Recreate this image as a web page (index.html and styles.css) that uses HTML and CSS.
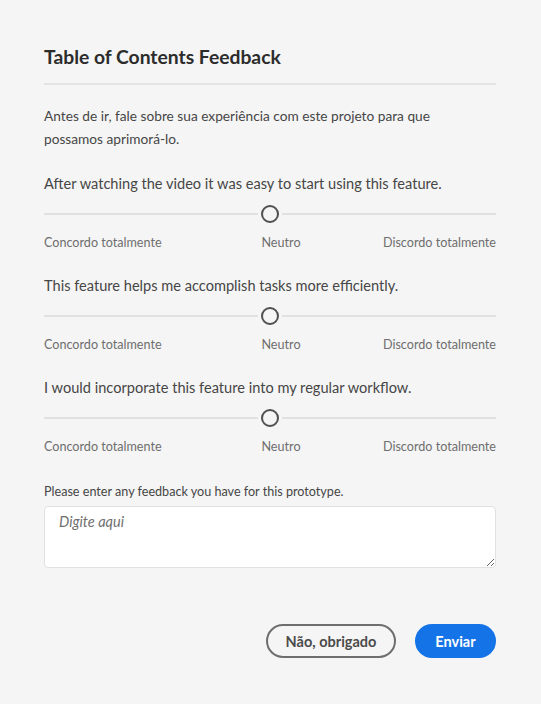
FILE: index.html
```html
<!DOCTYPE html>
<html lang="pt">
<head>
<meta charset="utf-8">
<link rel="stylesheet" href="styles.css">
</head>
<body>
<div class="dialog">
  <h1 class="title">Table of Contents Feedback</h1>
  <p class="intro">Antes de ir, fale sobre sua experiência com este projeto para que possamos aprimorá-lo.</p>

  <div class="question">
    <div class="q-text">After watching the video it was easy to start using this feature.</div>
    <div class="slider"><span class="track"></span><span class="thumb"></span><span class="track"></span></div>
    <div class="labels"><span>Concordo totalmente</span><span class="mid">Neutro</span><span class="end">Discordo totalmente</span></div>
  </div>

  <div class="question">
    <div class="q-text">This feature helps me accomplish tasks more efficiently.</div>
    <div class="slider"><span class="track"></span><span class="thumb"></span><span class="track"></span></div>
    <div class="labels"><span>Concordo totalmente</span><span class="mid">Neutro</span><span class="end">Discordo totalmente</span></div>
  </div>

  <div class="question">
    <div class="q-text">I would incorporate this feature into my regular workflow.</div>
    <div class="slider"><span class="track"></span><span class="thumb"></span><span class="track"></span></div>
    <div class="labels"><span>Concordo totalmente</span><span class="mid">Neutro</span><span class="end">Discordo totalmente</span></div>
  </div>

  <label class="fb-label" for="fb">Please enter any feedback you have for this prototype.</label>
  <textarea id="fb" class="fb" placeholder="Digite aqui"></textarea>

  <div class="actions">
    <button class="btn btn-secondary">Não, obrigado</button>
    <button class="btn btn-primary">Enviar</button>
  </div>
</div>
</body>
</html>
```

FILE: styles.css
```css
html, body {
  margin: 0;
  padding: 0;
  background: #f5f5f5;
}
body {
  font-family: Lato, "Open Sans", sans-serif;
  color: #464646;
}
.dialog {
  width: 452px;
  padding: 45px 45px 0 44px;
  display: flex;
  flex-direction: column;
}
.title {
  margin: 0;
  font-size: 19.3px;
  line-height: 24px;
  font-weight: 700;
  color: #2c2c2c;
  padding-bottom: 14px;
  border-bottom: 2px solid #e3e3e3;
}
.intro {
  margin: 19px 0 0;
  max-width: 425px;
  font-size: 13.7px;
  line-height: 23px;
}
.question {
  margin-top: 22px;
  display: flex;
  flex-direction: column;
}
.question + .question {
  margin-top: 23px;
}
.q-text {
  font-size: 14.6px;
  line-height: 23px;
}
.slider {
  margin-top: 10px;
  height: 18px;
  display: flex;
  align-items: center;
  gap: 3px;
}
.track {
  flex: 1;
  height: 2px;
  background: #e1e1e1;
}
.thumb {
  width: 14px;
  height: 14px;
  border: 2px solid #505050;
  border-radius: 50%;
  background: #f5f5f5;
}
.labels {
  margin-top: 12px;
  display: grid;
  grid-template-columns: 1fr auto 1fr;
  font-size: 12.6px;
  line-height: 16px;
  color: #6e6e6e;
}
.labels .mid {
  padding-left: 22px;
}
.labels .end {
  text-align: right;
}
.fb-label {
  margin-top: 29px;
  font-size: 12.6px;
  line-height: 16px;
  color: #464646;
}
.fb {
  margin-top: 6px;
  height: 62px;
  box-sizing: border-box;
  border: 1px solid #e1e1e1;
  border-radius: 4px;
  background: #fff;
  padding: 4px 14px;
  font-family: inherit;
  font-size: 14.5px;
  line-height: 22px;
  color: #2c2c2c;
}
.fb::placeholder {
  font-style: italic;
  color: #707070;
}
.actions {
  margin-top: 56px;
  display: flex;
  justify-content: flex-end;
  gap: 19px;
}
.btn {
  height: 34px;
  border-radius: 17px;
  font-family: inherit;
  font-size: 14.5px;
  font-weight: 700;
  padding: 0 12px;
  box-sizing: border-box;
}
.btn-secondary {
  width: 130px;
  border: 2px solid #6e6e6e;
  background: transparent;
  color: #4b4b4b;
}
.btn-primary {
  width: 81px;
  border: 2px solid #1473e6;
  background: #1473e6;
  color: #fff;
}
```
